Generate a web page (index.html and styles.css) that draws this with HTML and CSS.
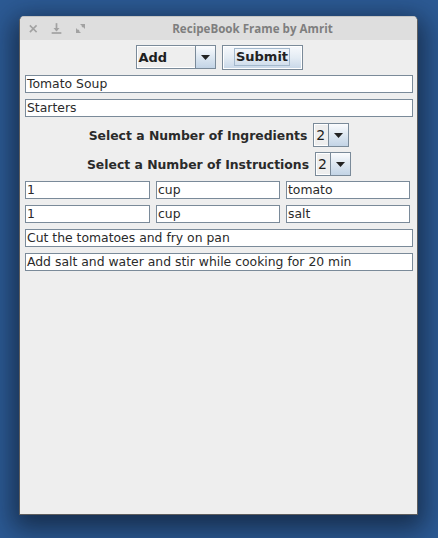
FILE: index.html
```html
<!DOCTYPE html>
<html>
<head>
<meta charset="utf-8">
<link rel="stylesheet" href="styles.css">
</head>
<body>
<div class="window">
  <div class="titlebar">
    <svg class="wm-icons" width="70" height="23" viewBox="0 0 70 23">
      <g stroke="#a2a2a2" stroke-width="1.7" fill="none" stroke-linecap="square">
        <path d="M10.5 9 L16 14.5 M16 9 L10.5 14.5"/>
        <path d="M36.5 7 L36.5 12.5"/>
        <path d="M32.5 16 L40.5 16"/>
      </g>
      <g fill="#a2a2a2">
        <path d="M33.5 11 L39.5 11 L36.5 14.5 Z"/>
        <path d="M60 7 L65 7 L65 12 Z"/>
        <path d="M56 11 L56 16 L61 16 Z"/>
      </g>
      <g stroke="#a2a2a2" stroke-width="1.2">
        <path d="M62 10 L63.5 8.5 M57.5 14.5 L59 13"/>
      </g>
    </svg>
    <div class="title">RecipeBook Frame by Amrit</div>
  </div>
  <div class="content">
    <div class="toprow">
      <div class="combo combo-add">
        <span class="combo-val bold">Add</span>
        <span class="combo-btn"><svg width="9" height="5" viewBox="0 0 9 5"><path d="M0 0 L9 0 L4.5 5 Z" fill="#222"/></svg></span>
      </div>
      <div class="btn"><span class="focus">Submit</span></div>
    </div>
    <div class="field gap6">Tomato Soup</div>
    <div class="field gap6">Starters</div>
    <div class="labelrow gap6">
      <span class="label">Select a Number of Ingredients</span>
      <div class="combo combo-num">
        <span class="combo-val">2</span>
        <span class="combo-btn"><svg width="9" height="5" viewBox="0 0 9 5"><path d="M0 0 L9 0 L4.5 5 Z" fill="#222"/></svg></span>
      </div>
    </div>
    <div class="labelrow gap5">
      <span class="label">Select a Number of Instructions</span>
      <div class="combo combo-num">
        <span class="combo-val">2</span>
        <span class="combo-btn"><svg width="9" height="5" viewBox="0 0 9 5"><path d="M0 0 L9 0 L4.5 5 Z" fill="#222"/></svg></span>
      </div>
    </div>
    <div class="ingrow gap5">
      <div class="field">1</div>
      <div class="field">cup</div>
      <div class="field">tomato</div>
    </div>
    <div class="ingrow gap6">
      <div class="field">1</div>
      <div class="field">cup</div>
      <div class="field">salt</div>
    </div>
    <div class="field gap6">Cut the tomatoes and fry on pan</div>
    <div class="field gap6">Add salt and water and stir while cooking for 20 min</div>
  </div>
</div>
</body>
</html>
```

FILE: styles.css
```css
html, body {
  margin: 0;
  padding: 0;
}
body {
  width: 438px;
  height: 538px;
  overflow: hidden;
  background: #2c5a94;
  font-family: "DejaVu Sans", sans-serif;
  font-size: 12.4px;
  color: #222;
}
.window {
  box-sizing: border-box;
  margin: 16px 0 0 19px;
  width: 399px;
  height: 499px;
  background: #eeeeee;
  border: 1px solid #5e5e5e;
  border-top-color: #c4c4c4;
  border-radius: 5px 5px 0 0;
  box-shadow: 0 8px 26px 6px rgba(8, 16, 30, 0.6);
  display: flex;
  flex-direction: column;
}
.titlebar {
  height: 23px;
  background: #dedede;
  border-radius: 4px 4px 0 0;
  display: flex;
  align-items: center;
}
.wm-icons {
  flex: none;
  display: block;
}
.title {
  flex: 1;
  text-align: center;
  font-family: "Open Sans", "DejaVu Sans", sans-serif;
  font-weight: bold;
  font-size: 11.6px;
  color: #7e7e7e;
  padding-right: 2px;
}
.content {
  padding: 0 4px 0 5px;
  display: flex;
  flex-direction: column;
}
.bold {
  font-weight: bold;
}
.toprow {
  margin-top: 5px;
  height: 24px;
  display: flex;
  justify-content: center;
  align-items: center;
  gap: 6px;
}
.combo {
  box-sizing: border-box;
  height: 24px;
  border: 1px solid #7a8a99;
  display: flex;
  background: #eeeeee;
}
.combo-val {
  flex: 1;
  display: flex;
  align-items: center;
  padding-left: 1px;
  border: 1px solid #ffffff;
  border-right: none;
  font-size: 13px;
  color: #1e1e1e;
}
.combo-add {
  width: 80px;
}
.combo-num {
  width: 36px;
}
.combo-num .combo-val {
  padding-left: 1px;
  font-size: 14px;
}
.combo-btn {
  width: 19px;
  border-left: 1px solid #7a8a99;
  background: linear-gradient(#fbfcfe, #dde7f1 50%, #c3d4e6);
  display: flex;
  align-items: center;
  justify-content: center;
}
.btn {
  box-sizing: border-box;
  width: 81px;
  height: 25px;
  border: 1px solid #7a8a99;
  box-shadow: inset 0 0 0 1px #ffffff;
  background: linear-gradient(#f7f9fc, #e4ecf4 50%, #c7d7e8);
  display: flex;
  align-items: center;
  justify-content: center;
  font-weight: bold;
  font-size: 13px;
}
.focus {
  border: 1px solid #a3b8cc;
  padding: 0 1px;
  line-height: 16px;
}
.field {
  box-sizing: border-box;
  height: 18px;
  border: 1px solid #7a8a99;
  background: #ffffff;
  padding-left: 1px;
  line-height: 16px;
  white-space: nowrap;
  overflow: hidden;
  color: #2a2a2a;
}
.gap5 {
  margin-top: 5px;
}
.gap6 {
  margin-top: 6px;
}
.labelrow {
  height: 24px;
  display: flex;
  justify-content: center;
  align-items: center;
  gap: 6px;
}
.label {
  font-weight: bold;
  color: #2a2a2a;
}
.ingrow {
  display: grid;
  grid-template-columns: 125px 124px 124px;
  column-gap: 6px;
}
```
